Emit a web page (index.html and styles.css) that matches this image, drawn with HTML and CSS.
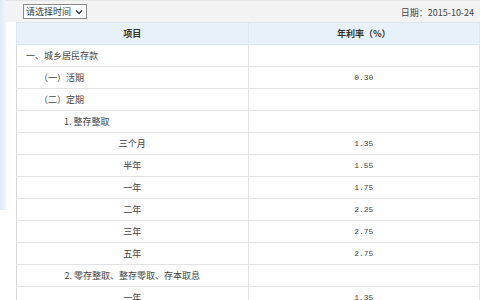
FILE: index.html
```html
<!DOCTYPE html>
<html>
<head>
<meta charset="utf-8">
<link rel="stylesheet" href="styles.css">
</head>
<body>
<div class="page">
  <div class="strip"></div>
  <div class="main">
    <div class="bar">
      <div class="select"><span>请选择时间</span><svg class="chev" width="8" height="6" viewBox="0 0 8 6"><path d="M1 1.5 L4 4.5 L7 1.5" fill="none" stroke="#333" stroke-width="1.3"/></svg></div>
      <div class="date">日期：2015-10-24</div>
    </div>
    <table class="rates">
      <thead>
        <tr><th>项目</th><th>年利率（%）</th></tr>
      </thead>
      <tbody>
        <tr><td class="l1">一、城乡居民存款</td><td></td></tr>
        <tr><td class="l2">（一）活期</td><td class="num">0.30</td></tr>
        <tr><td class="l2">（二）定期</td><td></td></tr>
        <tr><td class="l3">1. 整存整取</td><td></td></tr>
        <tr><td class="c">三个月</td><td class="num">1.35</td></tr>
        <tr><td class="c">半年</td><td class="num">1.55</td></tr>
        <tr><td class="c">一年</td><td class="num">1.75</td></tr>
        <tr><td class="c">二年</td><td class="num">2.25</td></tr>
        <tr><td class="c">三年</td><td class="num">2.75</td></tr>
        <tr><td class="c">五年</td><td class="num">2.75</td></tr>
        <tr><td class="c">2. 零存整取、整存零取、存本取息</td><td></td></tr>
        <tr><td class="c">一年</td><td class="num">1.35</td></tr>
      </tbody>
    </table>
  </div>
</div>
</body>
</html>
```

FILE: styles.css
```css
html, body {
  margin: 0;
  padding: 0;
  background: #fff;
  overflow: hidden;
}
body {
  font-family: "Noto Sans CJK SC", "Liberation Sans", sans-serif;
  font-size: 9px;
  color: #333;
}
.page {
  display: flex;
  align-items: flex-start;
  width: 480px;
  height: 300px;
}
.strip {
  width: 6px;
  height: 210px;
  background: linear-gradient(to right, #dcecf6, #eef6fb);
  flex: none;
}
.main {
  flex: 1;
  min-width: 0;
}
.bar {
  height: 22px;
  background: #f3f3f3;
  border-top: 1px solid #e4e4e4;
  box-sizing: border-box;
  display: flex;
  align-items: center;
  justify-content: space-between;
  padding: 0 6px 0 17px;
}
.select {
  display: flex;
  align-items: center;
  gap: 4px;
  height: 13px;
  padding: 0 3px 0 2px;
  border: 1px solid #8a8a8a;
  background: #fff;
  font-size: 9px;
  color: #333;
  line-height: 13px;
}
.chev { display: block; }
.date {
  font-size: 9px;
  color: #444;
  margin-top: 2px;
}
.rates {
  margin-left: 10px;
  width: 464px;
  border-collapse: collapse;
  table-layout: fixed;
}
.rates th, .rates td {
  height: 21px;
  padding: 0;
  border: 1px solid #e3e3e3;
  white-space: nowrap;
  overflow: hidden;
}
.rates th {
  background: #e7f1fa;
  font-weight: bold;
  text-align: center;
  color: #333;
  border-color: #dde6ee;
}
.rates td:first-child { border-left-color: #d8d8d8; }
.rates td { color: #444; }
.l1 { padding-left: 9px !important; }
.l2 { padding-left: 22px !important; }
.l3 { padding-left: 47px !important; }
.c { text-align: center; }
.num {
  text-align: center;
  font-family: "Liberation Mono", "DejaVu Sans Mono", monospace;
  font-size: 8px;
  color: #555;
}
```
